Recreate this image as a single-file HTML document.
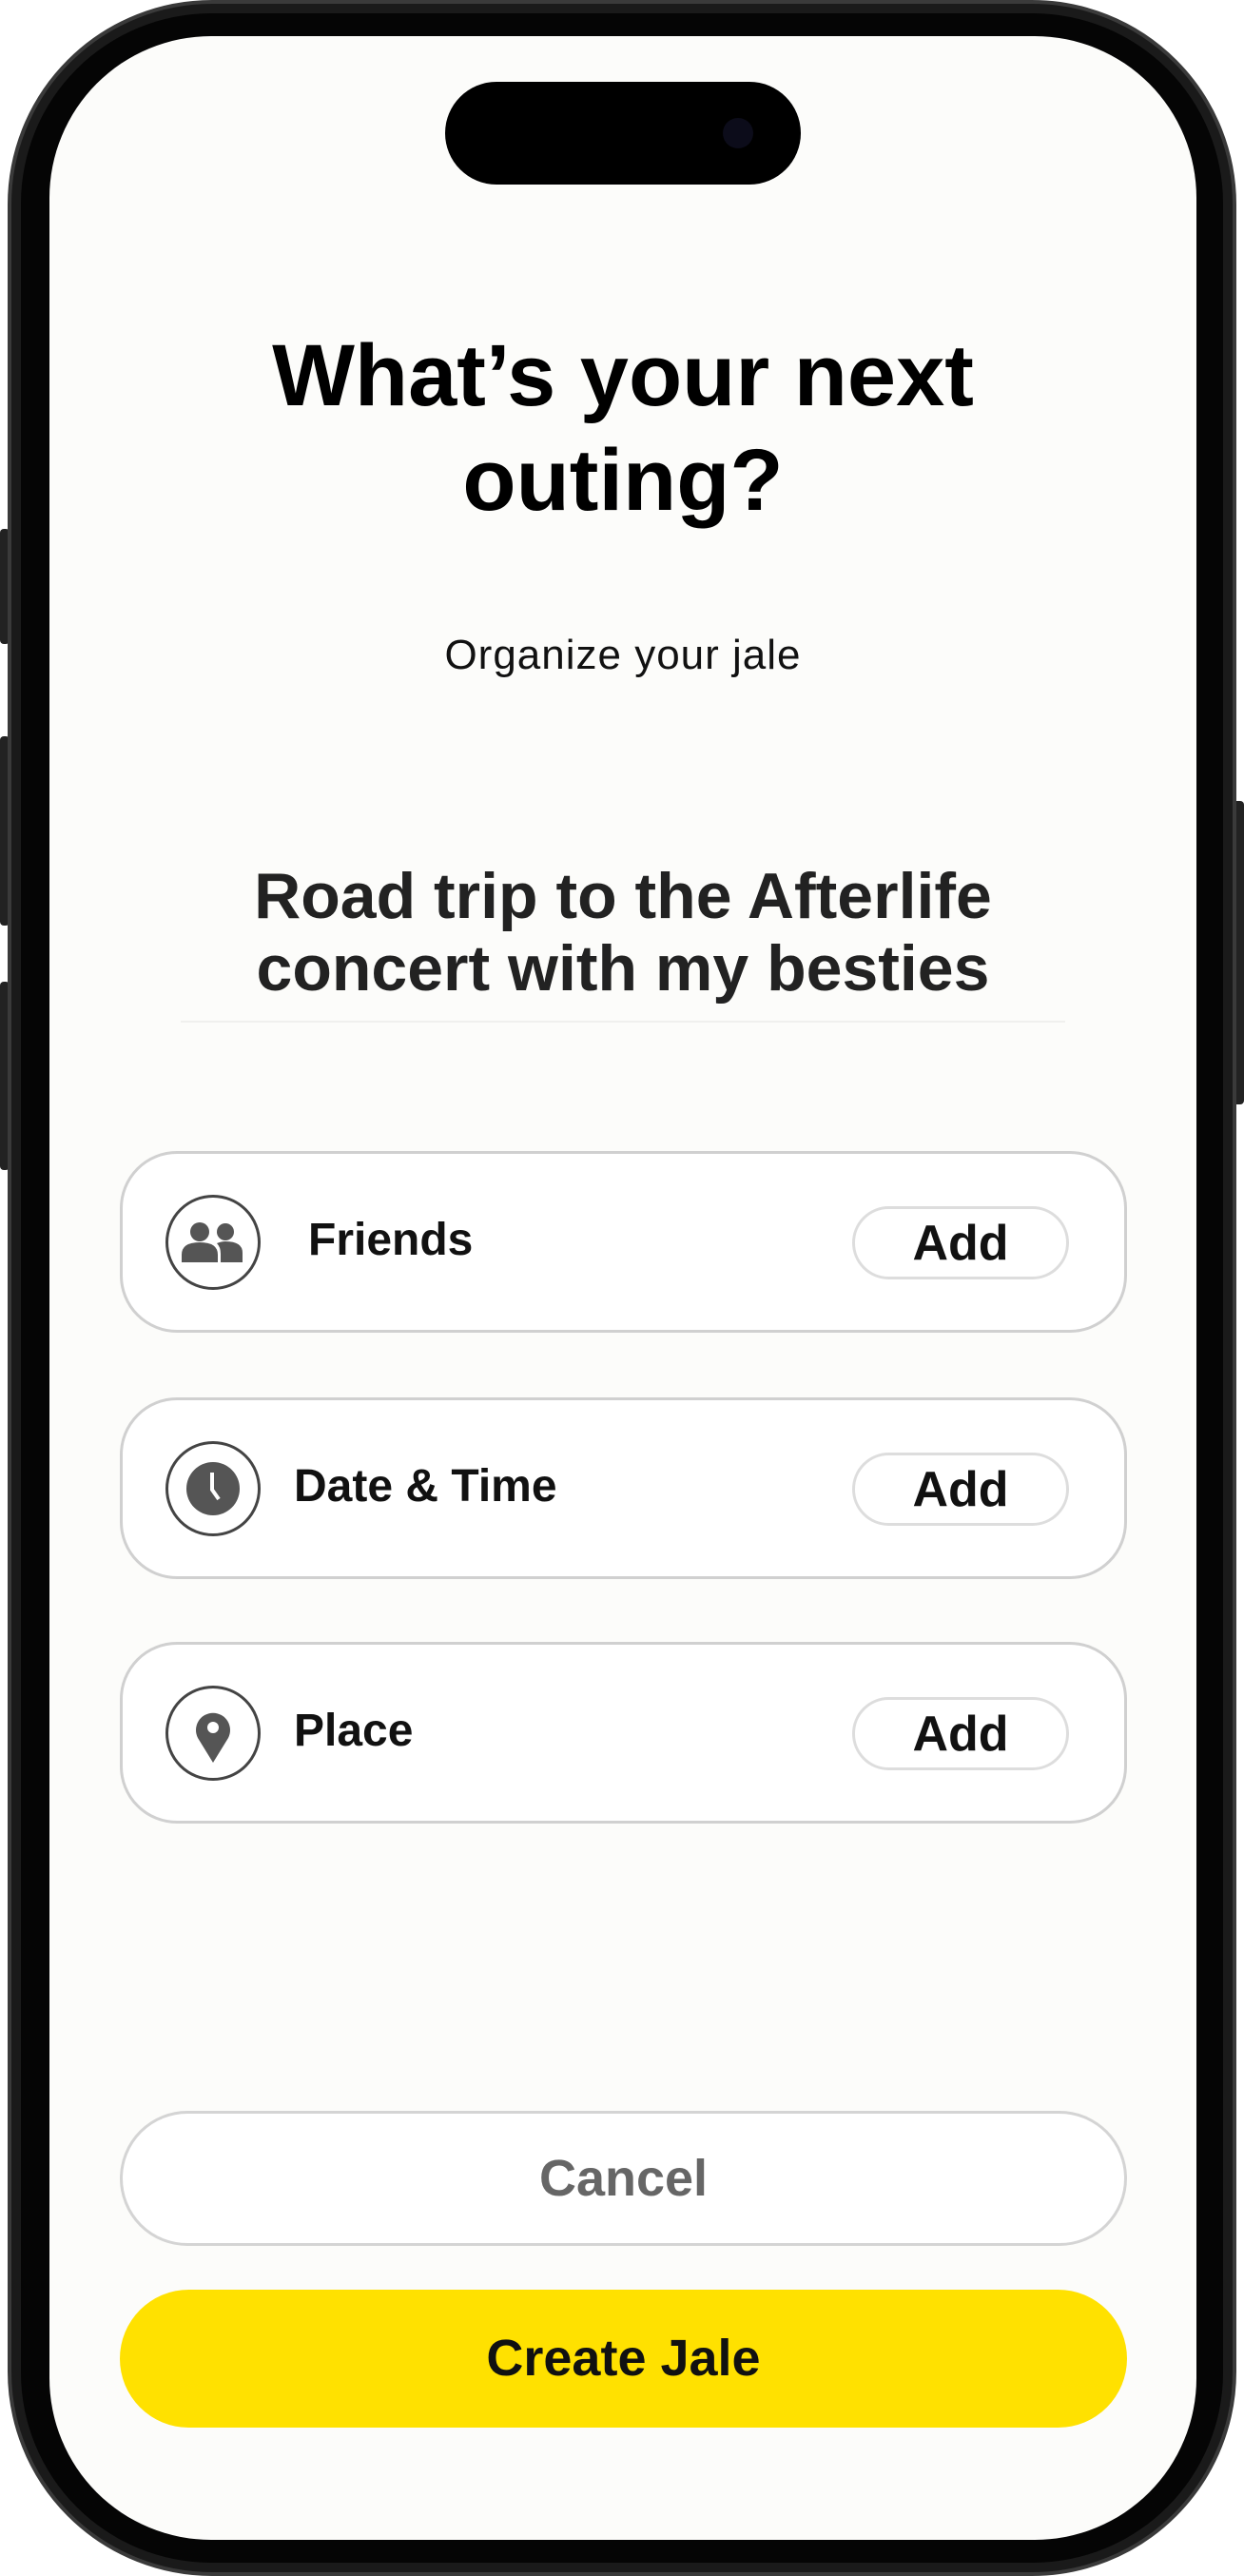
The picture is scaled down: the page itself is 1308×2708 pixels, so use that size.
<!DOCTYPE html>
<html><head><meta charset="utf-8"><style>
*{margin:0;padding:0;box-sizing:border-box}
body{width:1308px;height:2708px;background:#fff;position:relative;overflow:hidden;font-family:"Liberation Sans",Arial,sans-serif}
.frame{position:absolute;left:8px;top:0;width:1292px;height:2708px;border-radius:215px;background:#1a1a1a;border:4px solid #3a3a3a}
.frame2{position:absolute;left:22px;top:14px;width:1264px;height:2680px;border-radius:200px;background:#050505}
.screen{position:absolute;left:52px;top:38px;width:1206px;height:2632px;border-radius:170px;background:#fcfcfa;overflow:hidden}
.island{position:absolute;left:468px;top:86px;width:374px;height:108px;border-radius:54px;background:#000}
.cam{position:absolute;left:760px;top:124px;width:32px;height:32px;border-radius:50%;background:#0c0c1a}
.btn{position:absolute;background:#222;border-radius:4px}
.c{position:absolute;left:0;width:1206px;text-align:center}
.card{position:absolute;left:74px;width:1059px;height:191px;border:3px solid #d0d0d0;border-radius:60px;background:#fff}
.ic{position:absolute;left:45px;top:43px;width:100px;height:100px;border:3px solid #444;border-radius:50%}
.lbl{position:absolute;top:63px;font-size:48px;font-weight:bold;color:#111}
.add{position:absolute;left:767px;top:55px;width:228px;height:77px;border:3px solid #ddd;border-radius:40px;font-size:52px;font-weight:bold;text-align:center;line-height:72px;color:#111;background:#fff}
.pill{position:absolute;left:74px;width:1059px;border-radius:80px;text-align:center;font-weight:bold;font-size:54px}
</style></head><body>
<div class="btn" style="left:0;top:556px;width:10px;height:121px"></div>
<div class="btn" style="left:0;top:774px;width:10px;height:199px"></div>
<div class="btn" style="left:0;top:1032px;width:10px;height:198px"></div>
<div class="btn" style="left:1296px;top:842px;width:12px;height:319px"></div>
<div class="frame"></div>
<div class="frame2"></div>
<div class="screen">
 <div class="c" style="top:302px;font-size:92px;font-weight:bold;line-height:110px;color:#000">What’s your next<br>outing?</div>
 <div class="c" style="top:626px;font-size:44px;letter-spacing:1px;color:#111">Organize your jale</div>
 <div class="c" style="top:866px;font-size:68px;font-weight:bold;line-height:76px;color:#222">Road trip to the Afterlife<br>concert with my besties</div>
 <div style="position:absolute;left:138px;top:1035px;width:930px;height:2px;background:#f0f0ee"></div>
 <div class="card" style="top:1172px">
  <div class="ic"><svg width="94" height="94" viewBox="0 0 94 94"><circle cx="33" cy="36" r="10" fill="#555"/><circle cx="60" cy="36" r="9" fill="#555"/><path d="M14 68v-8q0-13 19-13t19 13v8z" fill="#555"/><path d="M55 68v-9q0-7-4-11 5-2 9-2 18 0 18 12v10z" fill="#555"/></svg></div>
  <div class="lbl" style="left:195px">Friends</div><div class="add">Add</div></div>
 <div class="card" style="top:1431px">
  <div class="ic"><svg width="94" height="94" viewBox="0 0 94 94"><circle cx="47" cy="47" r="28" fill="#555"/><path d="M46 30v18l7 10" stroke="#fff" stroke-width="4" fill="none"/></svg></div>
  <div class="lbl" style="left:180px">Date &amp; Time</div><div class="add">Add</div></div>
 <div class="card" style="top:1688px">
  <div class="ic"><svg width="94" height="94" viewBox="0 0 94 94"><path d="M47 78 31 52a18 18 0 1 1 32 0z" fill="#555"/><circle cx="47" cy="41" r="6" fill="#fff"/></svg></div>
  <div class="lbl" style="left:180px">Place</div><div class="add">Add</div></div>
 <div class="pill" style="top:2181px;height:142px;border:3px solid #d4d4d4;line-height:136px;color:#666;background:#fff">Cancel</div>
 <div class="pill" style="top:2369px;height:145px;background:#ffe100;line-height:145px;color:#111">Create Jale</div>
</div>
<div class="island"></div><div class="cam"></div>
</body></html>
